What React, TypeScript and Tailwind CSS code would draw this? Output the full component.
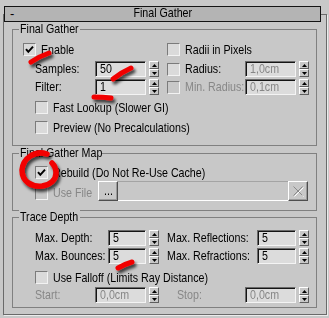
import React from 'react';

type TProps = { children: React.ReactNode; dim?: boolean; center?: boolean };

// 3ds Max uses a narrow UI face: Arial squeezed to ~82% width
const T = ({ children, dim, center }: TProps) => (
  <span
    className={`inline-block whitespace-nowrap [transform:scaleX(0.82)] ${center ? 'origin-center' : 'origin-left'} ${
      dim ? 'text-[#878787]' : 'text-black'
    }`}
  >
    {children}
  </span>
);

const Check = ({ on, dim }: { on?: boolean; dim?: boolean }) => (
  <div
    className={`w-[13px] h-[13px] shrink-0 border border-t-[#7b7b7b] border-l-[#7b7b7b] border-b-[#f2f2f2] border-r-[#f2f2f2] flex items-center justify-center ${
      dim ? 'bg-[#c8c8c8]' : 'bg-[#dadada]'
    }`}
  >
    {on && (
      <svg width="11" height="11" viewBox="0 0 11 11">
        <path d="M2 5.2 L4.3 7.8 L9 2.6" fill="none" stroke="#000" strokeWidth="2" />
      </svg>
    )}
  </div>
);

const Field = ({ w, v, dim }: { w: string; v: string; dim?: boolean }) => (
  <div
    className={`${w} h-[16px] shrink-0 border border-t-[#6a6a6a] border-l-[#6a6a6a] border-b-[#f4f4f4] border-r-[#f4f4f4] shadow-[inset_1px_1px_0_#151515] bg-[#dcdcdc] pl-[4px] leading-[14px] overflow-hidden`}
  >
    <T dim={dim}>{v}</T>
  </div>
);

const Spinner = () => (
  <div className="ml-[3px] w-[10px] h-[16px] shrink-0 flex flex-col">
    <div className="h-[8px] border border-t-white border-l-white border-b-[#5e5e5e] border-r-[#5e5e5e] bg-[#c8c8c8] flex items-center justify-center">
      <svg width="5" height="3" viewBox="0 0 5 3">
        <path d="M2.5 0 L5 3 L0 3Z" fill="#000" />
      </svg>
    </div>
    <div className="h-[8px] border border-t-white border-l-white border-b-[#5e5e5e] border-r-[#5e5e5e] bg-[#c8c8c8] flex items-center justify-center">
      <svg width="5" height="3" viewBox="0 0 5 3">
        <path d="M0 0 L5 0 L2.5 3Z" fill="#000" />
      </svg>
    </div>
  </div>
);

const Group = ({ label, lw, className, children }: { label: string; lw: string; className: string; children: React.ReactNode }) => (
  <div className={`relative w-[305px] border border-[#808080] flex flex-col ${className}`}>
    <div className={`absolute left-[6px] -top-[8px] ${lw} h-[14px] bg-[#c8c8c8] pl-[1px] leading-[14px]`}>
      <T>{label}</T>
    </div>
    {children}
  </div>
);

const Raised = ({ w, children }: { w: string; children?: React.ReactNode }) => (
  <div
    className={`${w} h-[20px] shrink-0 border border-t-white border-l-white border-b-[#4e4e4e] border-r-[#4e4e4e] shadow-[inset_-1px_-1px_0_#9a9a9a] bg-[#c8c8c8] flex items-center justify-center`}
  >
    {children}
  </div>
);

export default function App() {
  return (
    <div className="relative w-[329px] h-[318px] bg-[#c8c8c8] overflow-hidden pt-[6px] font-['Liberation_Sans',Arial,sans-serif] text-[13px] leading-[16px] text-black select-none">
      {/* rollout title */}
      <div className="relative z-10 ml-[4px] w-[317px] h-[16px] border border-[#141414] bg-[#b4b4b4] pb-[2px] flex items-center justify-center leading-[14px]">
        <span className="absolute left-[5px] top-[0px] leading-[14px]">-</span>
        <T center>Final Gather</T>
      </div>

      {/* rollout body */}
      <div className="ml-[3px] -mt-[8px] w-[324px] h-[301px] border border-[#6a6a6a] shadow-[1px_1px_0_#ececec] pt-[14px] pl-[8px]">
        <Group label="Final Gather" lw="w-[61px]" className="h-[117px]">
          <div className="flex h-[13px] mt-[13px]">
            <div className="w-[154px] flex items-center pl-[10px] gap-[5px]">
              <Check on />
              <T>Enable</T>
            </div>
            <div className="flex items-center gap-[5px]">
              <Check />
              <T>Radii in Pixels</T>
            </div>
          </div>

          <div className="flex h-[16px] mt-[5px]">
            <div className="w-[154px] flex items-center pl-[22px]">
              <div className="w-[60px]"><T>Samples:</T></div>
              <Field w="w-[51px]" v="50" />
              <Spinner />
            </div>
            <div className="flex items-center">
              <Check />
              <div className="ml-[5px] w-[60px]"><T>Radius:</T></div>
              <Field w="w-[51px]" v="1,0cm" dim />
              <Spinner />
            </div>
          </div>

          <div className="flex h-[16px] mt-[2px]">
            <div className="w-[154px] flex items-center pl-[22px]">
              <div className="w-[60px]"><T>Filter:</T></div>
              <Field w="w-[51px]" v="1" />
              <Spinner />
            </div>
            <div className="flex items-center">
              <Check dim />
              <div className="ml-[5px] w-[60px]"><T dim>Min. Radius:</T></div>
              <Field w="w-[51px]" v="0,1cm" dim />
              <Spinner />
            </div>
          </div>

          <div className="flex items-center h-[13px] mt-[6px] pl-[22px] gap-[5px]">
            <Check />
            <T>Fast Lookup (Slower GI)</T>
          </div>
          <div className="flex items-center h-[13px] mt-[7px] pl-[22px] gap-[5px]">
            <Check />
            <T>Preview (No Precalculations)</T>
          </div>
        </Group>

        <Group label="Final Gather Map" lw="w-[83px]" className="h-[58px] mt-[7px]">
          <div className="flex items-center h-[13px] mt-[12px] pl-[22px] gap-[5px]">
            <Check on />
            <T>Rebuild (Do Not Re-Use Cache)</T>
          </div>
          <div className="flex items-start h-[20px] mt-[2px] pl-[22px]">
            <div className="mt-[6px]"><Check dim /></div>
            <div className="ml-[5px] w-[45px] pt-[4px]"><T dim>Use File</T></div>
            <Raised w="w-[20px]">
              <T center>...</T>
            </Raised>
            <div className="w-[170px] h-[20px] border-t border-t-[#a4a4a4] border-b border-b-white bg-[#c8c8c8]" />
            <Raised w="w-[20px]">
              <svg width="11" height="11" viewBox="0 0 11 11">
                <path d="M1.5 1.5 L10.5 10.5 M10.5 1.5 L1.5 10.5" stroke="#ffffff" strokeWidth="1" />
                <path d="M0.5 0.5 L9.5 9.5 M9.5 0.5 L0.5 9.5" stroke="#8a8a8a" strokeWidth="1" />
              </svg>
            </Raised>
          </div>
        </Group>

        <Group label="Trace Depth" lw="w-[61px]" className="h-[91px] mt-[6px]">
          <div className="flex h-[16px] mt-[12px]">
            <div className="w-[154px] flex items-center pl-[22px]">
              <div className="w-[73px]"><T>Max. Depth:</T></div>
              <Field w="w-[38px]" v="5" />
              <Spinner />
            </div>
            <div className="flex items-center">
              <div className="w-[90px]"><T>Max. Reflections:</T></div>
              <Field w="w-[39px]" v="5" />
              <Spinner />
            </div>
          </div>

          <div className="flex h-[16px] mt-[2px]">
            <div className="w-[154px] flex items-center pl-[22px]">
              <div className="w-[73px]"><T>Max. Bounces:</T></div>
              <Field w="w-[38px]" v="5" />
              <Spinner />
            </div>
            <div className="flex items-center">
              <div className="w-[90px]"><T>Max. Refractions:</T></div>
              <Field w="w-[39px]" v="5" />
              <Spinner />
            </div>
          </div>

          <div className="flex items-center h-[13px] mt-[7px] pl-[22px] gap-[5px]">
            <Check />
            <T>Use Falloff (Limits Ray Distance)</T>
          </div>

          <div className="flex h-[16px] mt-[3px]">
            <div className="w-[154px] flex items-center pl-[22px]">
              <div className="w-[60px]"><T dim>Start:</T></div>
              <Field w="w-[51px]" v="0,0cm" dim />
              <Spinner />
            </div>
            <div className="flex items-center pl-[10px]">
              <div className="w-[68px]"><T dim>Stop:</T></div>
              <Field w="w-[51px]" v="0,0cm" dim />
              <Spinner />
            </div>
          </div>
        </Group>
      </div>

      {/* red annotation strokes drawn over the screenshot */}
      <svg className="absolute inset-0 pointer-events-none" width="329" height="318" viewBox="0 0 329 318">
        <defs>
          <filter id="sh" x="-50%" y="-50%" width="200%" height="200%">
            <feDropShadow dx="2" dy="3" stdDeviation="1.8" floodColor="#000" floodOpacity="0.7" />
          </filter>
        </defs>
        <g filter="url(#sh)" stroke="#f20000" strokeWidth="5" strokeLinecap="round" fill="none">
          <path d="M31 62 Q40 56 49 53" />
          <path d="M113 79 Q122 72 131 68" />
          <path d="M94 97 Q103 97 111 98" />
          <path d="M47 154 C35 150 23 158 22 170 C22 182 32 187 42 186 C50 185 56 180 56 173 C56 168 54 165 52 163" strokeWidth="5.5" />
          <path d="M118 268 Q125 264 132 262" />
        </g>
      </svg>
    </div>
  );
}
